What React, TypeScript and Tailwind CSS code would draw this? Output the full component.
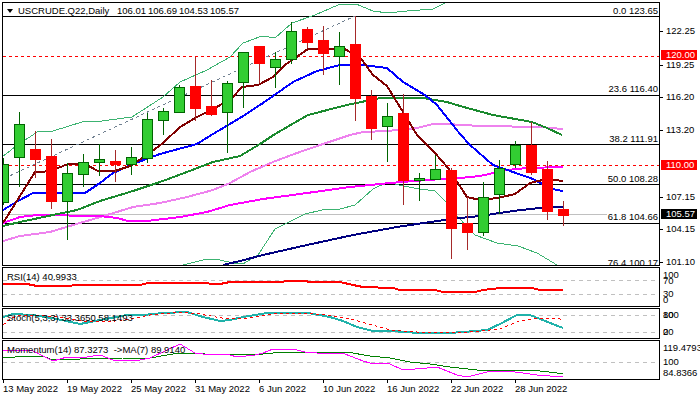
type Pt = [number, number];

const poly = (pts: Pt[]) => pts.map(([x, y]) => `${x},${y}`).join(" ");
const snap = (y: number) => Math.round(y) + 0.5;

// open, close as body top / bottom, then high and low, all in page pixels
const candles: [string, number, number, number, number][] = [
  ["g", 164, 202, 158, 205], ["g", 124, 157, 112, 187], ["r", 149, 159, 131, 178], ["r", 156, 201, 139, 209],
  ["g", 173, 201, 163, 240], ["g", 162, 174, 154, 187], ["g", 159, 162, 144, 176], ["r", 161, 164, 150, 182],
  ["g", 157, 164, 147, 175], ["g", 119, 158, 113, 163], ["g", 111, 120, 108, 135], ["g", 87, 112, 85, 112],
  ["r", 86, 108, 57, 121], ["r", 106, 114, 80, 116], ["g", 83, 112, 81, 153], ["g", 52, 82, 52, 108],
  ["r", 46, 63, 46, 83], ["g", 59, 67, 52, 88], ["g", 31, 59, 22, 64], ["r", 29, 42, 27, 48],
  ["r", 40, 53, 26, 75], ["g", 46, 56, 32, 85], ["r", 44, 98, 16, 121], ["r", 96, 128, 90, 140],
  ["g", 116, 126, 103, 162], ["r", 113, 180, 94, 205], ["g", 178, 180, 173, 201], ["g", 169, 179, 155, 179],
  ["r", 170, 228, 168, 259], ["r", 223, 232, 197, 250], ["g", 197, 232, 182, 236], ["g", 168, 194, 160, 214],
  ["g", 145, 164, 141, 168], ["r", 145, 172, 122, 175], ["r", 169, 211, 161, 220], ["r", 209, 215, 201, 226],
];

const bbUpper: Pt[] = [[2, 157], [20, 143], [33, 135], [37, 132], [53, 131], [82, 122], [102, 121], [132, 117], [163, 97], [180, 82], [207, 70], [230, 57], [243, 43], [262, 36], [275, 38], [292, 23], [315, 15], [338, 5], [356, 4], [373, 11], [388, 13], [407, 11], [433, 9], [445, 3], [450, 0]];
const bbLower: Pt[] = [[183, 265], [207, 259], [220, 260], [233, 263], [243, 264], [258, 255], [275, 229], [287, 223], [305, 214], [322, 210], [340, 209], [355, 205], [373, 189], [388, 182], [403, 186], [420, 189], [435, 191], [445, 201], [458, 217], [475, 235], [497, 243], [518, 246], [537, 253], [557, 265]];
const brown: Pt[] = [[3, 223], [35, 172], [43, 172], [58, 168], [68, 164], [85, 164], [98, 171], [115, 171], [130, 166], [147, 155], [163, 143], [180, 127], [197, 117], [217, 107], [233, 97], [242, 87], [258, 85], [273, 77], [285, 65], [308, 49], [345, 49], [362, 60], [373, 75], [387, 86], [403, 112], [417, 135], [435, 153], [448, 168], [467, 197], [480, 200], [498, 198], [515, 194], [530, 183], [547, 179], [563, 181]];
const blue: Pt[] = [[3, 210], [18, 201], [33, 193], [85, 193], [100, 183], [113, 173], [133, 164], [160, 154], [197, 144], [213, 134], [240, 118], [263, 103], [293, 82], [317, 71], [340, 65], [363, 65], [387, 68], [403, 82], [425, 95], [437, 105], [460, 134], [470, 145], [493, 165], [513, 172], [533, 179], [552, 189], [563, 191]];
const green: Pt[] = [[3, 226], [20, 222], [53, 215], [77, 210], [100, 201], [133, 191], [160, 182], [187, 172], [213, 162], [240, 156], [260, 144], [275, 134], [308, 115], [347, 105], [380, 98], [423, 98], [447, 102], [460, 106], [493, 115], [532, 122], [547, 128], [562, 135]];
const violet: Pt[] = [[3, 241], [20, 236], [50, 232], [80, 223], [107, 215], [133, 207], [160, 203], [187, 197], [213, 190], [230, 183], [250, 172], [273, 162], [297, 153], [323, 144], [350, 135], [363, 132], [387, 131], [417, 128], [433, 124], [450, 124], [460, 125], [483, 126], [540, 127], [563, 129]];
const magenta: Pt[] = [[3, 223], [20, 217], [37, 215], [100, 216], [117, 218], [128, 221], [147, 221], [180, 217], [207, 212], [230, 205], [263, 199], [307, 193], [350, 187], [390, 183], [427, 180], [460, 178], [480, 176], [507, 170], [527, 168], [563, 167]];
const navy: Pt[] = [[223, 265], [240, 261], [263, 255], [307, 245], [353, 235], [397, 227], [437, 221], [460, 218], [480, 216], [513, 211], [540, 208], [563, 207]];

const rsi: Pt[] = [[3, 284], [27, 284], [37, 286], [67, 286], [77, 285], [140, 285], [148, 283], [197, 283], [220, 284], [230, 282], [283, 282], [285, 281], [307, 281], [308, 282], [340, 282], [353, 285], [363, 287], [393, 288], [400, 290], [435, 290], [443, 292], [475, 292], [483, 290], [492, 289], [500, 288], [532, 288], [540, 290], [563, 290]];
const stochMain: Pt[] = [[3, 317], [13, 314], [33, 315], [57, 319], [80, 324], [100, 320], [127, 315], [143, 315], [163, 313], [187, 312], [203, 317], [220, 321], [230, 320], [243, 317], [267, 313], [308, 313], [330, 317], [343, 321], [357, 327], [373, 331], [390, 331], [420, 333], [450, 333], [475, 331], [487, 330], [500, 324], [517, 315], [530, 315], [540, 319], [563, 328]];
const stochSignal: Pt[] = [[3, 325], [10, 319], [20, 315], [33, 315], [57, 317], [83, 321], [107, 322], [130, 319], [150, 315], [180, 312], [200, 314], [227, 319], [250, 318], [273, 314], [303, 313], [327, 315], [350, 319], [373, 325], [390, 330], [417, 332], [470, 332], [480, 331], [500, 329], [517, 322], [537, 318], [560, 319], [563, 322]];
const momentum: Pt[] = [[3, 350], [33, 351], [43, 356], [53, 361], [67, 357], [87, 357], [100, 355], [113, 360], [140, 360], [150, 358], [167, 350], [180, 344], [195, 353], [203, 354], [230, 355], [237, 357], [255, 355], [263, 353], [273, 349], [293, 349], [305, 352], [317, 353], [345, 354], [363, 361], [370, 363], [390, 364], [403, 370], [427, 368], [437, 367], [457, 375], [467, 377], [487, 372], [497, 371], [507, 371], [523, 373], [537, 375], [563, 377]];
const momentumMa: Pt[] = [[3, 358], [27, 356], [43, 356], [50, 359], [80, 359], [123, 358], [150, 358], [167, 355], [180, 353], [230, 355], [263, 354], [283, 352], [347, 352], [370, 356], [390, 358], [410, 362], [430, 364], [450, 367], [477, 370], [507, 370], [540, 371], [557, 373], [563, 374]];

const fibLabels: [string, number][] = [["0.0 123.65", 11], ["23.6 116.40", 89], ["38.2 111.91", 139], ["50.0 108.28", 179], ["61.8 104.66", 217], ["76.4 100.17", 263]];
const fibLines = [16, 95, 144, 184, 223];
const priceAxis: [string, number][] = [["122.25", 31], ["119.25", 65], ["116.20", 97], ["113.20", 130], ["107.15", 197], ["104.15", 229], ["101.10", 262]];
const dates = ["13 May 2022", "19 May 2022", "25 May 2022", "31 May 2022", "6 Jun 2022", "10 Jun 2022", "16 Jun 2022", "22 Jun 2022", "28 Jun 2022"];

function Line({ pts, color, width = 2, dash }: { pts: Pt[]; color: string; width?: number; dash?: string }) {
  return <polyline points={poly(pts)} fill="none" stroke={color} strokeWidth={width} strokeDasharray={dash} />;
}

function Candle({ i, c }: { i: number; c: (typeof candles)[number] }) {
  const x = 3.5 + 16 * i;
  const [kind, top, bottom, high, low] = c;
  const isUp = kind === "g";
  return (
    <g>
      <line x1={x} x2={x} y1={high} y2={low} stroke={isUp ? "#006400" : "#a52a2a"} />
      <rect
        x={x - 5}
        y={snap(top)}
        width={10}
        height={Math.round(bottom) - Math.round(top)}
        fill={isUp ? "#32cd32" : "#ff0000"}
        stroke={isUp ? "#006400" : "#ff0000"}
      />
    </g>
  );
}

// plot svg uses page coordinates so the pane only has to set its viewBox
function Plot({ top, height, children }: { top: number; height: number; children: React.ReactNode }) {
  return (
    <svg
      className="absolute left-0 top-0"
      width={656}
      height={height}
      viewBox={`3 ${top} 656 ${height}`}
      shapeRendering="crispEdges"
    >
      {children}
    </svg>
  );
}

function AxisLabel({ text, y, top }: { text: string; y: number; top: number }) {
  return (
    <div className="absolute left-0 flex items-center h-[10px]" style={{ top: y - top - 5 }}>
      <div className="w-[3px] h-px bg-black mr-[3px]" />
      <span>{text}</span>
    </div>
  );
}

function SubLabel({ text, y, top }: { text: string; y: number; top: number }) {
  return (
    <span className="absolute left-[3px] whitespace-nowrap" style={{ top: y - top - 5 }}>
      {text}
    </span>
  );
}

function Pane({ height, axis, children }: { height: string; axis?: React.ReactNode; children: React.ReactNode }) {
  return (
    <div className={`flex ${height}`}>
      <div className="relative w-[658px] border border-black overflow-hidden">{children}</div>
      <div className="relative flex-1">{axis}</div>
    </div>
  );
}

function PriceTag({ text, y, className }: { text: string; y: number; className: string }) {
  return (
    <div
      className={`absolute left-px w-[36px] h-[10px] flex items-center pl-[5px] ${className}`}
      style={{ top: y - 2 }}
    >
      {text}
    </div>
  );
}

export default function App() {
  return (
    <div
      className="w-[700px] h-[400px] bg-white overflow-hidden text-black text-[9.5px] leading-none pt-[2px] pl-[2px] flex flex-col gap-px"
      style={{ fontFamily: '"Liberation Sans", Arial, sans-serif' }}
    >
      <Pane
        height="h-[264px]"
        axis={
          <>
            {priceAxis.map(([t, y]) => (
              <AxisLabel key={t} text={t} y={y} top={2} />
            ))}
            <PriceTag text="120.00" y={50} className="bg-[#ff0000] text-white" />
            <PriceTag text="110.00" y={160} className="bg-[#ff0000] text-white" />
            <PriceTag text="105.57" y={209} className="bg-black text-white" />
          </>
        }
      >
        <Plot top={3} height={262}>
          {fibLines.map((y) => (
            <line key={y} x1={3} x2={659} y1={y + 0.5} y2={y + 0.5} stroke="#000" />
          ))}
          <line x1={3} x2={607} y1={214.5} y2={214.5} stroke="#c0c0c0" />
          <line x1={3} x2={659} y1={56.5} y2={56.5} stroke="#ff0000" strokeDasharray="3 3" />
          <line x1={3} x2={659} y1={165.5} y2={165.5} stroke="#ff0000" strokeDasharray="3 3" />
          <line x1={5} y1={178} x2={355} y2={16} stroke="#708090" strokeDasharray="3 3" />
          <Line pts={bbUpper} color="#3cb371" width={1} />
          <Line pts={bbLower} color="#3cb371" width={1} />
          <Line pts={violet} color="#ee82ee" />
          <Line pts={navy} color="#000080" />
          <Line pts={magenta} color="#ff00ff" />
          <Line pts={green} color="#1a8a2e" />
          <Line pts={blue} color="#0000ff" />
          <Line pts={brown} color="#800000" />
          {candles.map((c, i) => (
            <Candle key={i} i={i} c={c} />
          ))}
        </Plot>
        <div className="absolute left-[4px] top-[2px] h-[11px] flex items-center">
          <svg width="6" height="4" className="mr-[5px]">
            <path d="M0 0h6L3 4z" fill="#000" />
          </svg>
          <span className="w-[99px]">USCRUDE.Q22,Daily</span>
          <div className="flex">
            <span className="w-[31px]">106.01</span>
            <span className="w-[31px]">106.69</span>
            <span className="w-[31px]">104.53</span>
            <span className="w-[31px]">105.57</span>
          </div>
        </div>
        {fibLabels.map(([t, y]) => (
          <span key={t} className="absolute right-px" style={{ top: y - 8 }}>
            {t}
          </span>
        ))}
      </Pane>

      <Pane
        height="h-[40px]"
        axis={
          <>
            <SubLabel text="100" y={275} top={267} />
            <SubLabel text="70" y={281} top={267} />
            <SubLabel text="30" y={294} top={267} />
            <SubLabel text="0" y={300} top={267} />
          </>
        }
      >
        <Plot top={268} height={38}>
          <line x1={3} x2={659} y1={280.5} y2={280.5} stroke="#c0c0c0" strokeDasharray="4 4" />
          <line x1={3} x2={659} y1={294.5} y2={294.5} stroke="#c0c0c0" strokeDasharray="4 4" />
          <Line pts={rsi} color="#ff0000" />
        </Plot>
        <span className="absolute left-[4px] top-[4px]">RSI(14) 40.9933</span>
      </Pane>

      <Pane
        height="h-[31px]"
        axis={
          <>
            <SubLabel text="100" y={315} top={308} />
            <SubLabel text="80" y={315} top={308} />
            <SubLabel text="20" y={332} top={308} />
            <SubLabel text="0" y={332} top={308} />
          </>
        }
      >
        <Plot top={309} height={29}>
          <line x1={3} x2={659} y1={315.5} y2={315.5} stroke="#c0c0c0" strokeDasharray="4 4" />
          <line x1={3} x2={659} y1={332.5} y2={332.5} stroke="#c0c0c0" strokeDasharray="4 4" />
          <Line pts={stochMain} color="#20b2aa" />
          <Line pts={stochSignal} color="#ff0000" width={1} dash="3 3" />
        </Plot>
        <span className="absolute left-[4px] top-[4px]">Stoch(5,3,3) 33.3650 58.1493</span>
      </Pane>

      <Pane
        height="h-[40px]"
        axis={
          <>
            <SubLabel text="119.4793" y={348} top={340} />
            <SubLabel text="100" y={362} top={340} />
            <SubLabel text="84.8366" y={373} top={340} />
          </>
        }
      >
        <Plot top={341} height={38}>
          <line x1={3} x2={659} y1={362.5} y2={362.5} stroke="#c0c0c0" strokeDasharray="4 4" />
          <Line pts={momentumMa} color="#008000" width={1} />
          <Line pts={momentum} color="#ff00ff" width={1} />
        </Plot>
        <span className="absolute left-[4px] top-[4px] whitespace-pre">Momentum(14) 87.3273  -&gt;MA(7) 89.9140</span>
      </Pane>

      <div className="flex pl-px -mt-px">
        {dates.map((d) => (
          <div key={d} className="w-[64px] shrink-0">
            <div className="w-px h-[3px] bg-black" />
            <div className="mt-px whitespace-nowrap">{d}</div>
          </div>
        ))}
      </div>
    </div>
  );
}
